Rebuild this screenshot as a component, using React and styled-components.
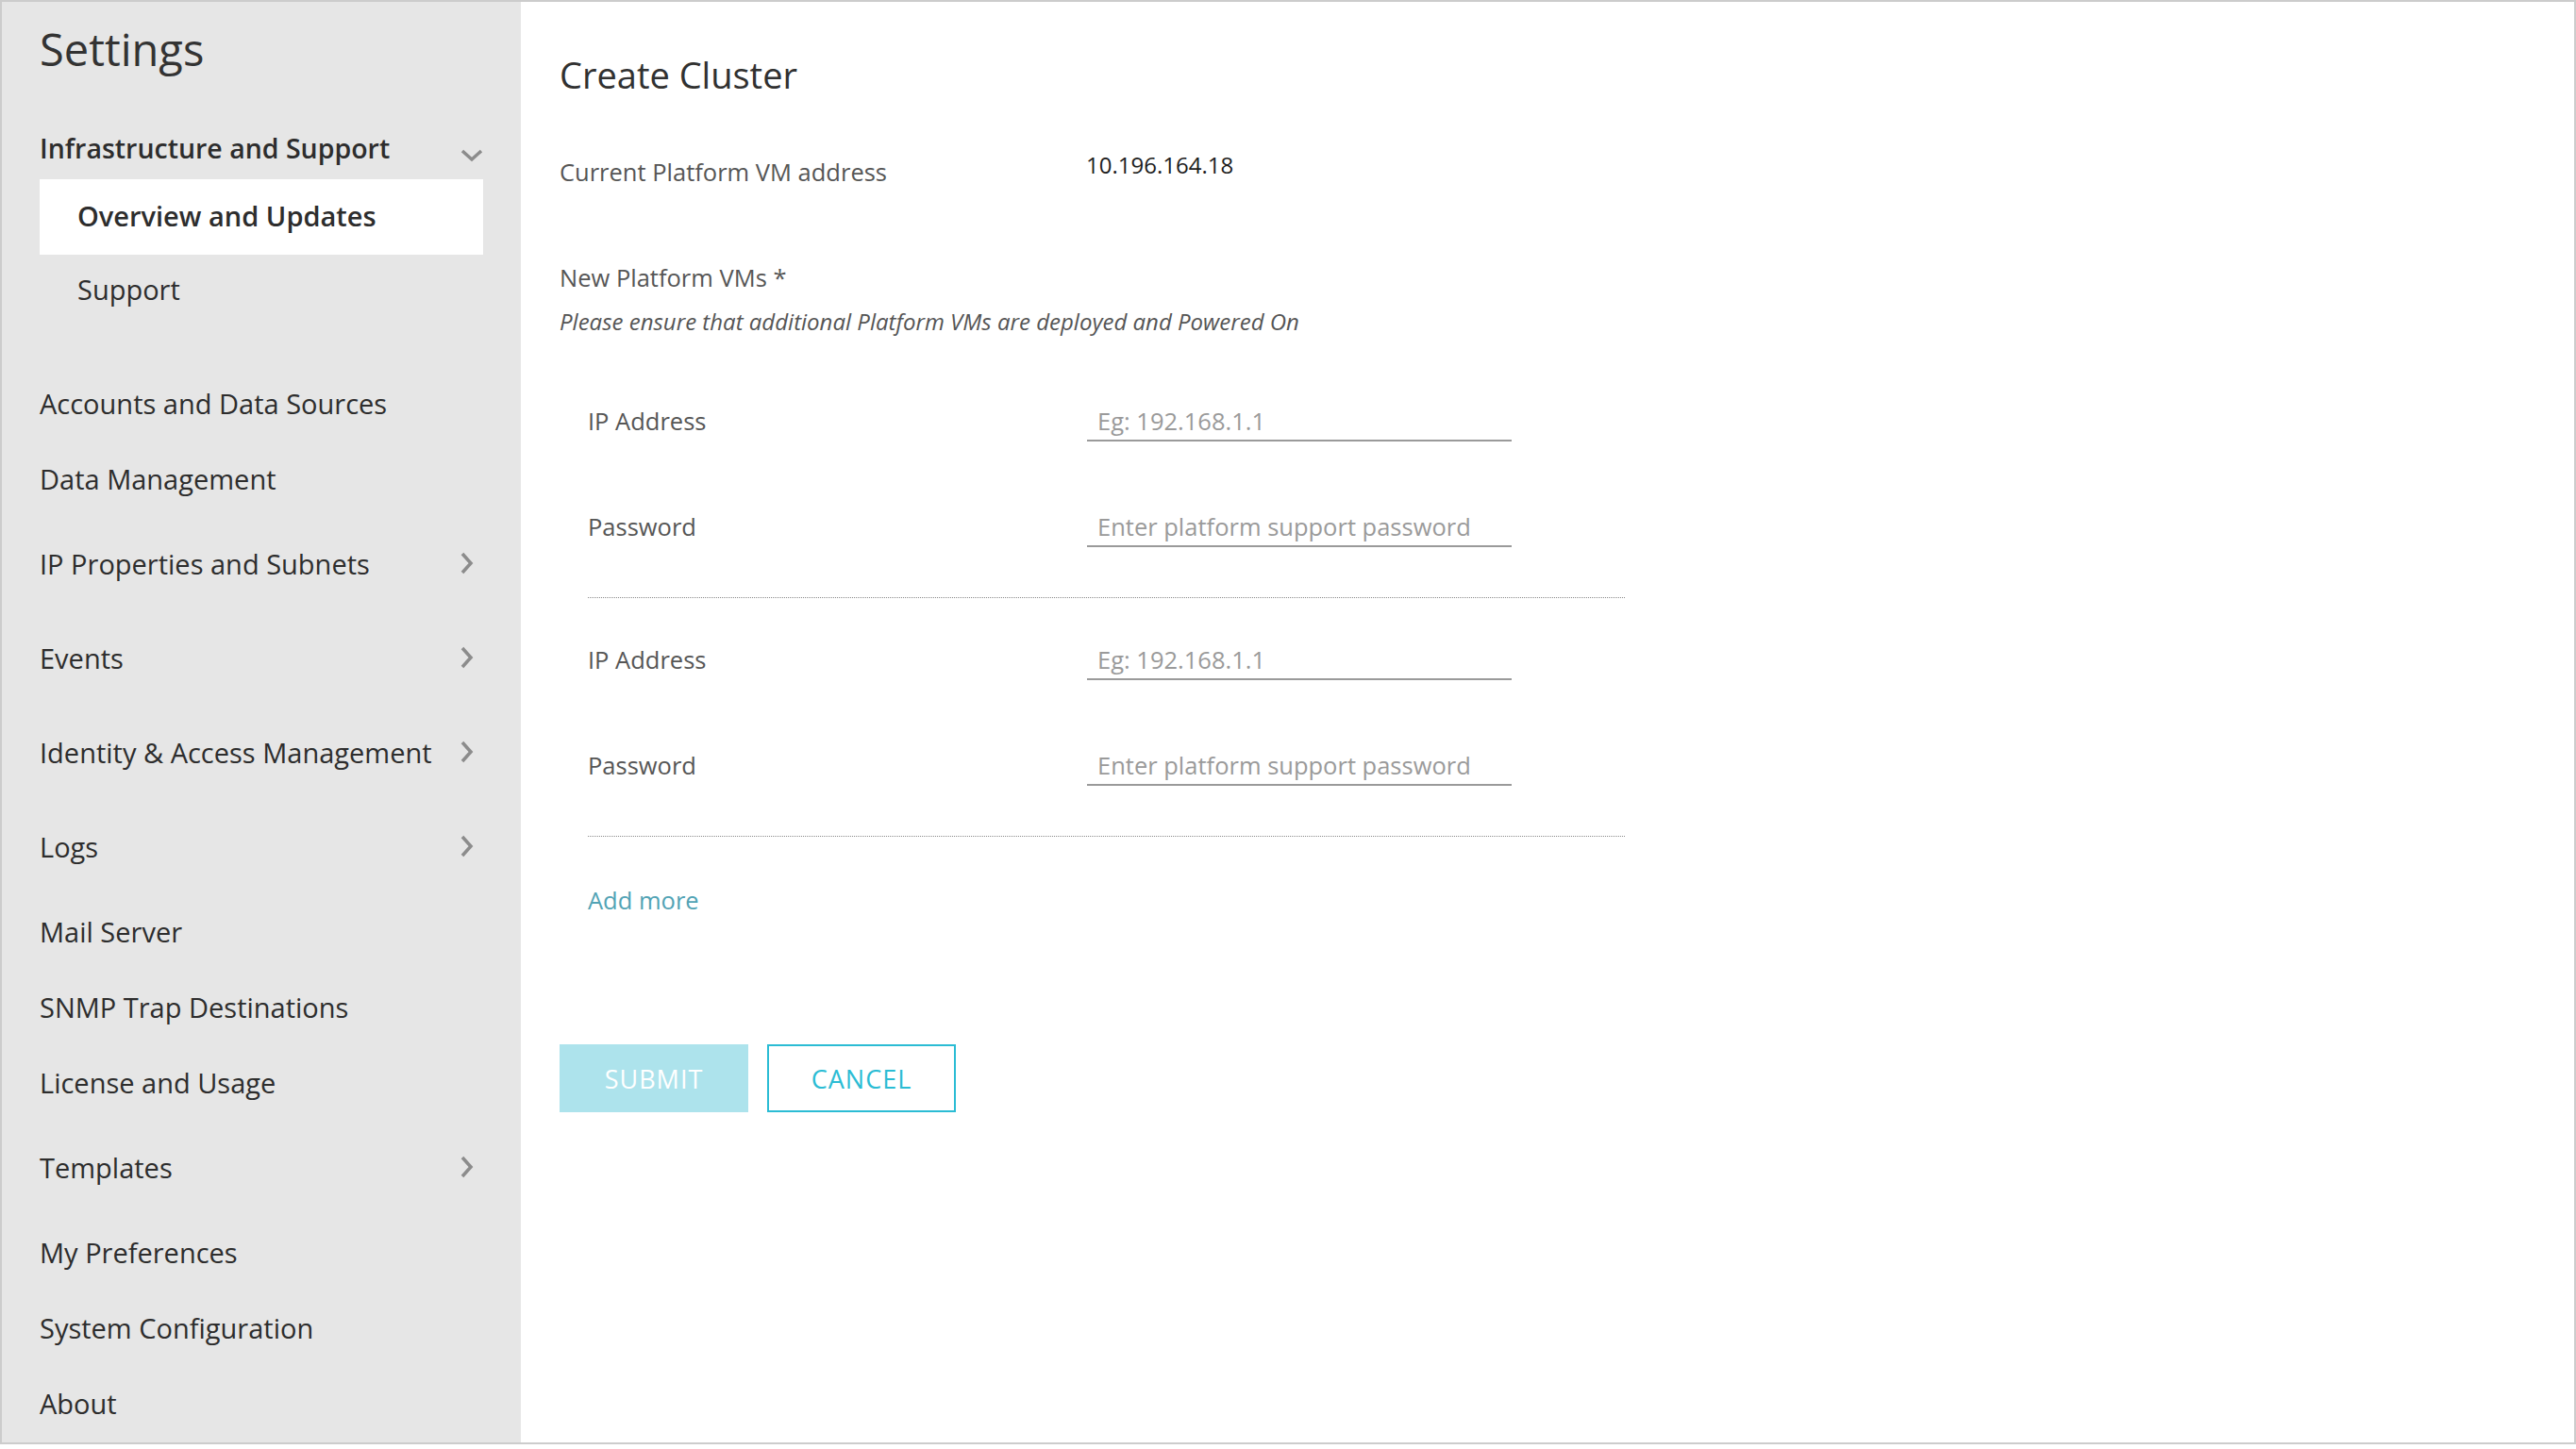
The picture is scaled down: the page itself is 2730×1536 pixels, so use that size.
import React from "react";
import styled, { createGlobalStyle } from "styled-components";

const FontStack = `"Open Sans", "Liberation Sans", sans-serif`;

const GlobalStyle = createGlobalStyle`
  html, body {
    margin: 0;
    padding: 0;
    background: #ffffff;
  }
  body {
    font-family: ${FontStack};
    color: #333;
  }
  * {
    box-sizing: border-box;
  }
`;

const Frame = styled.div`
  width: 2730px;
  height: 1531px;
  border: 2px solid #cccccc;
  display: flex;
  overflow: hidden;
`;

const Sidebar = styled.nav`
  width: 550px;
  flex-shrink: 0;
  background-color: #e6e6e6;
  padding: 20px 0 0 40px;
`;

const Title = styled.h1`
  margin: 0;
  font-size: 47px;
  line-height: 60px;
  font-weight: 400;
  color: #333;
`;

const GroupHeader = styled.div`
  margin-top: 41px;
  width: 470px;
  height: 67px;
  display: flex;
  align-items: center;
  justify-content: space-between;
  font-size: 28.5px;
  font-weight: 600;
  color: #2d2d2d;
`;

const SubItem = styled.div`
  width: 470px;
  height: ${(p) => (p.$active ? "80px" : "72px")};
  padding-left: 40px;
  padding-bottom: ${(p) => (p.$active ? "4px" : "0")};
  display: flex;
  align-items: center;
  font-size: 29px;
  font-weight: ${(p) => (p.$active ? 600 : 400)};
  background-color: ${(p) => (p.$active ? "#ffffff" : "transparent")};
  color: #2d2d2d;
`;

const NavList = styled.div`
  margin-top: 45px;
`;

const NavItem = styled.div`
  width: 470px;
  height: ${(p) => (p.$expandable ? "100px" : "80px")};
  padding-right: 10px;
  display: flex;
  align-items: center;
  justify-content: space-between;
  font-size: 29px;
  color: #2d2d2d;
`;

const Main = styled.main`
  flex: 1;
  padding: 53px 0 0 41px;
`;

const PageTitle = styled.h2`
  margin: 0;
  font-size: 38px;
  line-height: 48px;
  font-weight: 400;
  color: #313131;
`;

const InfoRow = styled.div`
  margin-top: 63px;
  display: flex;
  align-items: flex-start;
`;

const InfoLabel = styled.div`
  width: 558px;
  font-size: 25.5px;
  line-height: 32px;
  color: #565656;
`;

const InfoValue = styled.div`
  margin-top: -7px;
  font-size: 24px;
  line-height: 32px;
  color: #1d1d1d;
`;

const SectionLabel = styled.div`
  margin-top: 80px;
  font-size: 25.5px;
  line-height: 32px;
  color: #565656;
`;

const Note = styled.div`
  margin-top: 16px;
  font-size: 24px;
  line-height: 30px;
  font-style: italic;
  color: #555;
`;

const VmList = styled.div`
  margin-top: 25px;
  margin-left: 30px;
  width: 1099px;
`;

const VmBlock = styled.div`
  padding: 45px 0 53px;
  border-bottom: 1px dotted #8a8a8a;
  display: flex;
  flex-direction: column;
  gap: 70px;
`;

const FieldRow = styled.div`
  display: flex;
  align-items: baseline;
`;

const FieldLabel = styled.label`
  width: 529px;
  font-size: 25.5px;
  color: #565656;
`;

const TextInput = styled.input`
  width: 450px;
  height: 42px;
  padding: 0 11px;
  border: none;
  border-bottom: 2px solid #9a9a9a;
  background: transparent;
  font-family: ${FontStack};
  font-size: 25.5px;
  color: #333;
  outline: none;

  &::placeholder {
    color: #9a9a9a;
  }
`;

const AddMore = styled.a`
  display: block;
  margin: 52px 0 0 30px;
  font-size: 25.5px;
  line-height: 30px;
  color: #51a3b5;
  text-decoration: none;
  cursor: pointer;
`;

const ButtonBar = styled.div`
  margin-top: 138px;
  display: flex;
  gap: 20px;
`;

const Button = styled.button`
  width: 200px;
  height: 72px;
  font-family: ${FontStack};
  font-size: 27px;
  letter-spacing: 1px;
  text-transform: uppercase;
  cursor: pointer;
  background-color: ${(p) => (p.$primary ? "#ade3ec" : "#ffffff")};
  color: ${(p) => (p.$primary ? "#ffffff" : "#2bbcd4")};
  border: 2px solid ${(p) => (p.$primary ? "#ade3ec" : "#2bbcd4")};
`;

const ChevronDown = () => (
  <svg width="24" height="14" viewBox="0 0 24 14" style={{ marginTop: 16 }}>
    <polyline
      points="2,2 12,11 22,2"
      fill="none"
      stroke="#8c8c8c"
      strokeWidth="3.5"
    />
  </svg>
);

const ChevronRight = () => (
  <svg width="14" height="24" viewBox="0 0 14 24">
    <polyline
      points="2,2 11,12 2,22"
      fill="none"
      stroke="#8c8c8c"
      strokeWidth="3.5"
    />
  </svg>
);

const navItems = [
  { label: "Accounts and Data Sources" },
  { label: "Data Management" },
  { label: "IP Properties and Subnets", expandable: true },
  { label: "Events", expandable: true },
  { label: "Identity & Access Management", expandable: true },
  { label: "Logs", expandable: true },
  { label: "Mail Server" },
  { label: "SNMP Trap Destinations" },
  { label: "License and Usage" },
  { label: "Templates", expandable: true },
  { label: "My Preferences" },
  { label: "System Configuration" },
  { label: "About" },
];

const VmFields = () => (
  <VmBlock>
    <FieldRow>
      <FieldLabel>IP Address</FieldLabel>
      <TextInput placeholder="Eg: 192.168.1.1" />
    </FieldRow>
    <FieldRow>
      <FieldLabel>Password</FieldLabel>
      <TextInput type="password" placeholder="Enter platform support password" />
    </FieldRow>
  </VmBlock>
);

export default function App() {
  return (
    <>
      <GlobalStyle />
      <Frame>
        <Sidebar>
          <Title>Settings</Title>
          <GroupHeader>
            Infrastructure and Support
            <ChevronDown />
          </GroupHeader>
          <SubItem $active>Overview and Updates</SubItem>
          <SubItem>Support</SubItem>
          <NavList>
            {navItems.map((item) => (
              <NavItem key={item.label} $expandable={item.expandable}>
                {item.label}
                {item.expandable && <ChevronRight />}
              </NavItem>
            ))}
          </NavList>
        </Sidebar>
        <Main>
          <PageTitle>Create Cluster</PageTitle>
          <InfoRow>
            <InfoLabel>Current Platform VM address</InfoLabel>
            <InfoValue>10.196.164.18</InfoValue>
          </InfoRow>
          <SectionLabel>New Platform VMs *</SectionLabel>
          <Note>Please ensure that additional Platform VMs are deployed and Powered On</Note>
          <VmList>
            <VmFields />
            <VmFields />
          </VmList>
          <AddMore>Add more</AddMore>
          <ButtonBar>
            <Button $primary>Submit</Button>
            <Button>Cancel</Button>
          </ButtonBar>
        </Main>
      </Frame>
    </>
  );
}
